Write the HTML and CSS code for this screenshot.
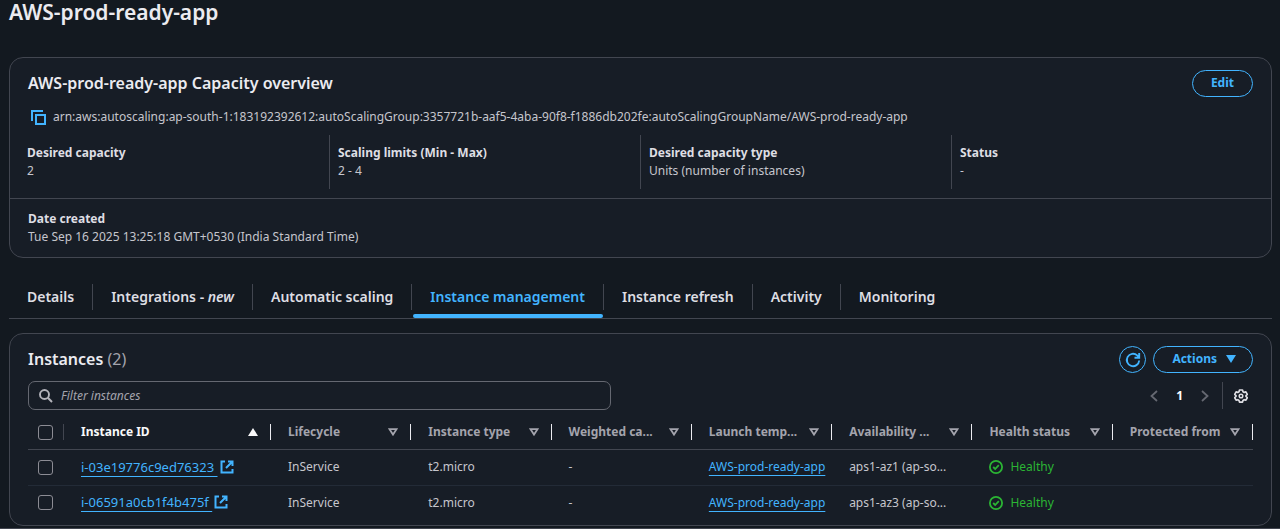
FILE: index.html
```html
<!DOCTYPE html>
<html lang="en">
<head>
<meta charset="utf-8">
<title>AWS-prod-ready-app</title>
<link rel="stylesheet" href="styles.css">
</head>
<body>
<svg class="defs" aria-hidden="true">
  <symbol id="sort" viewBox="0 0 10 8"><path d="M1.500 1.200h7L5 6.600z" fill="none" stroke="currentColor" stroke-width="1.800"/></symbol>
  <symbol id="external" viewBox="0 0 14 14"><path d="M5 1.500H1.500v11h11V9M8 1.500h4.500V6M12.500 1.500L6 8" fill="none" stroke="currentColor" stroke-width="2"/></symbol>
  <symbol id="check" viewBox="0 0 14 14"><circle cx="7" cy="7" r="6.100" fill="none" stroke="currentColor" stroke-width="1.800"/><path d="M4.200 7l2 2 3.600-3.800" fill="none" stroke="currentColor" stroke-width="1.800"/></symbol>
</svg>
<main class="page">
  <h1 class="page-title">AWS-prod-ready-app</h1>

  <section class="card overview">
    <header class="overview-head">
      <h2 class="card-title">AWS-prod-ready-app Capacity overview</h2>
      <button class="btn btn-edit" type="button">Edit</button>
    </header>
    <div class="arn">
      <button class="icon-btn copy" type="button" aria-label="Copy ARN"><svg width="15" height="15" viewBox="0 0 15 15"><path d="M1 11V1h11" fill="none" stroke="currentColor" stroke-width="2"/><rect x="5" y="5" width="9" height="9" fill="none" stroke="currentColor" stroke-width="2"/></svg></button>
      <span>arn:aws:autoscaling:ap-south-1:183192392612:autoScalingGroup:3357721b-aaf5-4aba-90f8-f1886db202fe:autoScalingGroupName/AWS-prod-ready-app</span>
    </div>
    <dl class="facts">
      <div class="fact"><dt>Desired capacity</dt><dd>2</dd></div>
      <div class="fact"><dt>Scaling limits (Min - Max)</dt><dd>2 - 4</dd></div>
      <div class="fact"><dt>Desired capacity type</dt><dd>Units (number of instances)</dd></div>
      <div class="fact"><dt>Status</dt><dd>-</dd></div>
    </dl>
    <dl class="created"><dt>Date created</dt><dd>Tue Sep 16 2025 13:25:18 GMT+0530 (India Standard Time)</dd></dl>
  </section>

  <nav class="tabs" role="tablist">
    <button class="tab" role="tab" type="button">Details</button>
    <button class="tab" role="tab" type="button">Integrations - <em>new</em></button>
    <button class="tab" role="tab" type="button">Automatic scaling</button>
    <button class="tab tab-active" role="tab" type="button" aria-selected="true">Instance management</button>
    <button class="tab" role="tab" type="button">Instance refresh</button>
    <button class="tab" role="tab" type="button">Activity</button>
    <button class="tab" role="tab" type="button">Monitoring</button>
  </nav>

  <section class="card instances">
    <header class="instances-head">
      <h2 class="card-title">Instances <span class="count">(2)</span></h2>
      <div class="actions">
        <button class="btn btn-round" type="button" aria-label="Refresh"><svg width="16" height="16" viewBox="0 0 16 16"><path d="M14.200 8.500a6.200 6.200 0 1 1-2-5.100l2 2M14.200 1v4.700H9.500" fill="none" stroke="currentColor" stroke-width="1.900"/></svg></button>
        <button class="btn btn-actions" type="button">Actions <svg width="10" height="8" viewBox="0 0 10 8"><path d="M0 0h10L5 8z" fill="currentColor"/></svg></button>
      </div>
    </header>
    <div class="tools">
      <label class="search">
        <svg width="14" height="14" viewBox="0 0 14 14"><circle cx="5.500" cy="5.500" r="4.500" fill="none" stroke="currentColor" stroke-width="1.900"/><path d="M8.800 8.800L13 13" stroke="currentColor" stroke-width="2"/></svg>
        <input class="search-input" type="text" placeholder="Filter instances" aria-label="Filter instances">
      </label>
      <div class="pager">
        <button class="icon-btn page-arrow" type="button" aria-label="Previous page"><svg width="8" height="12" viewBox="0 0 8 12"><path d="M7 1L1.500 6 7 11" fill="none" stroke="currentColor" stroke-width="1.800"/></svg></button>
        <button class="icon-btn page-num" type="button">1</button>
        <button class="icon-btn page-arrow" type="button" aria-label="Next page"><svg width="8" height="12" viewBox="0 0 8 12"><path d="M1 1l5.500 5L1 11" fill="none" stroke="currentColor" stroke-width="1.800"/></svg></button>
        <button class="icon-btn settings" type="button" aria-label="Preferences"><svg width="14" height="14" viewBox="0 0 14 14"><path d="M5.500 1h3l.5 1.700 1.200.7 1.700-.5 1.400 2.500L12 6.600v.9l1.300 1.200-1.400 2.500-1.700-.5-1.200.7-.5 1.700h-3L5 11.400l-1.200-.7-1.700.5L.7 8.700 2 7.500v-.9L.7 5.400l1.400-2.500 1.700.5L5 2.700z" fill="none" stroke="currentColor" stroke-width="1.700" stroke-linejoin="round"/><circle cx="7" cy="7" r="1.800" fill="none" stroke="currentColor" stroke-width="1.500"/></svg></button>
      </div>
    </div>
    <table class="table">
      <colgroup><col class="col-check"><col class="col-id"><col><col><col><col><col><col><col></colgroup>
      <thead>
        <tr>
          <th class="select"><div class="th"><input class="box" type="checkbox" aria-label="Select all instances"></div></th>
          <th class="sorted"><div class="th"><span class="name">Instance ID</span><svg width="10" height="8" viewBox="0 0 10 8"><path d="M5 0l5 8H0z" fill="currentColor"/></svg></div></th>
          <th><div class="th"><span class="name">Lifecycle</span><svg width="10" height="8"><use href="#sort"/></svg></div></th>
          <th><div class="th"><span class="name">Instance type</span><svg width="10" height="8"><use href="#sort"/></svg></div></th>
          <th><div class="th"><span class="name">Weighted ca...</span><svg width="10" height="8"><use href="#sort"/></svg></div></th>
          <th><div class="th"><span class="name">Launch temp...</span><svg width="10" height="8"><use href="#sort"/></svg></div></th>
          <th><div class="th"><span class="name">Availability ...</span><svg width="10" height="8"><use href="#sort"/></svg></div></th>
          <th><div class="th"><span class="name">Health status</span><svg width="10" height="8"><use href="#sort"/></svg></div></th>
          <th><div class="th"><span class="name">Protected from</span><svg width="10" height="8"><use href="#sort"/></svg></div></th>
        </tr>
      </thead>
      <tbody>
        <tr>
          <td class="select"><input class="box" type="checkbox" aria-label="Select i-03e19776c9ed76323"></td>
          <td><a class="link id" href="#">i-03e19776c9ed76323&nbsp;<svg class="ext" width="14" height="14"><use href="#external"/></svg></a></td>
          <td>InService</td><td>t2.micro</td><td>-</td>
          <td><a class="link" href="#">AWS-prod-ready-app</a></td>
          <td>aps1-az1 (ap-so...</td>
          <td><span class="healthy"><svg width="14" height="14"><use href="#check"/></svg>Healthy</span></td><td></td>
        </tr>
        <tr>
          <td class="select"><input class="box" type="checkbox" aria-label="Select i-06591a0cb1f4b475f"></td>
          <td><a class="link id" href="#">i-06591a0cb1f4b475f&nbsp;<svg class="ext" width="14" height="14"><use href="#external"/></svg></a></td>
          <td>InService</td><td>t2.micro</td><td>-</td>
          <td><a class="link" href="#">AWS-prod-ready-app</a></td>
          <td>aps1-az3 (ap-so...</td>
          <td><span class="healthy"><svg width="14" height="14"><use href="#check"/></svg>Healthy</span></td><td></td>
        </tr>
      </tbody>
    </table>
  </section>
</main>
<footer class="footer"></footer>
</body>
</html>
```

FILE: styles.css
```css
* { box-sizing: border-box; }
body {
  margin: 0;
  background: #131920;
  color: #c6c6cd;
  font: 12px/18px "Noto Sans", "Open Sans", sans-serif;
}
h1, h2, dl, dd { margin: 0; }
button, input { font: inherit; color: inherit; }
svg { display: block; flex: none; }
.defs { position: absolute; width: 0; height: 0; }
.page { padding: 0 8px 0 9px; }
.page-title { color: #ebebf0; font-size: 21px; line-height: 24px; font-weight: 600; }
.card { background: #171d26; border: 1px solid #424650; border-radius: 14px; }
.card-title { padding-bottom: 2px; color: #ebebf0; font-size: 16px; line-height: 20px; font-weight: 600; }
.count { color: #a4a4ad; font-weight: 400; }

.overview { margin-top: 33px; }
.overview-head { display: flex; justify-content: space-between; align-items: center; padding: 12px 18px 0; }
.btn {
  display: flex; align-items: center; justify-content: center;
  height: 27px; padding: 0 18px 1px;
  background: none; border: 1px solid #42b4ff; border-radius: 14px;
  color: #42b4ff; font-weight: 700;
}
.icon-btn { display: flex; align-items: center; padding: 0; border: 0; background: none; }
.arn { display: flex; align-items: center; gap: 7px; padding: 11px 18px 0 21px; }
.copy { color: #42b4ff; }
.facts { display: grid; grid-template-columns: repeat(4, 1fr); padding: 9px 9px 9px 8px; }
.fact { padding: 9px 9px 9px 8px; border-left: 1px solid #424650; }
.fact:first-child { border-color: transparent; }
dt { color: #dedee3; font-weight: 700; }
.created { padding: 11px 18px; border-top: 1px solid #424650; }

.tabs { display: flex; margin-top: 20px; padding-bottom: 8px; border-bottom: 1px solid #424650; }
.tab {
  margin: 6px 0 0; padding: 0 18px;
  border: 0; border-right: 1px solid #424650; background: none;
  color: #dedee3; font-size: 14px; line-height: 26px; font-weight: 600;
  position: relative;
}
.tab:last-child { border-right: 0; }
.tab-active { color: #42b4ff; }
.tab-active::after {
  content: ""; position: absolute; left: 1px; right: 0; bottom: -8px;
  height: 4px; border-radius: 2px; background: #42b4ff;
}

.instances { margin-top: 14px; padding: 12px 18px 5px; }
.instances-head, .actions, .tools, .pager { display: flex; align-items: center; }
.instances-head, .tools { justify-content: space-between; }
.actions { gap: 7px; }
.btn-round { width: 27px; padding: 0; }
.btn-actions { gap: 9px; padding: 0 16px 1px 18px; }
.tools { margin-top: 8px; }
.search {
  display: flex; align-items: center; gap: 8px;
  width: 47.6%; height: 29px; padding: 0 10px; margin-right: auto;
  border: 1px solid #656871; border-radius: 7px; color: #b4b4bb;
}
.search-input { flex: 1; min-width: 0; padding: 0; border: 0; outline: 0; background: none; }
.search-input::placeholder { color: #a4a4ad; font-style: italic; opacity: 1; }
.page-arrow { color: #656871; }
.pager { gap: 18px; }
.page-num { color: #ffffff; font-weight: 700; }
.settings { height: 27px; padding: 0 5px 0 11px; margin-left: -5px; border-left: 1px solid #424650; color: #dedee3; }

.table { width: 100%; margin-top: 6px; border-collapse: collapse; table-layout: fixed; }
.col-check { width: 36px; }
.col-id { width: 207px; }
th, td { padding: 0; text-align: left; white-space: nowrap; }
th { height: 33px; color: #a4a4ad; font-weight: 700; border-bottom: 1px solid #424650; }
.th { display: flex; align-items: center; justify-content: space-between; height: 16px; padding: 0 12px 0 17px; border-right: 1px solid #ebebf0; }
.sorted { color: #f9f9fa; }
.select .th { padding: 0 0 0 10px; border-color: #424650; }
td { height: 35px; padding-left: 17px; }
tbody tr:first-child td { height: 36px; border-bottom: 1px solid #232b37; }
td.select { padding-left: 10px; }
.box { appearance: none; display: block; width: 15px; height: 15px; margin: 0; border: 1px solid #8c8c94; border-radius: 3px; }
.link { color: #42b4ff; text-decoration: underline; text-underline-offset: 4px; }
.id { font-size: 13px; }
.ext { display: inline-block; margin-left: 2px; vertical-align: -2px; }
.healthy { display: flex; align-items: center; gap: 7px; color: #2bb534; }
.footer { margin-top: 2px; border-top: 1px solid #424650; }
```
